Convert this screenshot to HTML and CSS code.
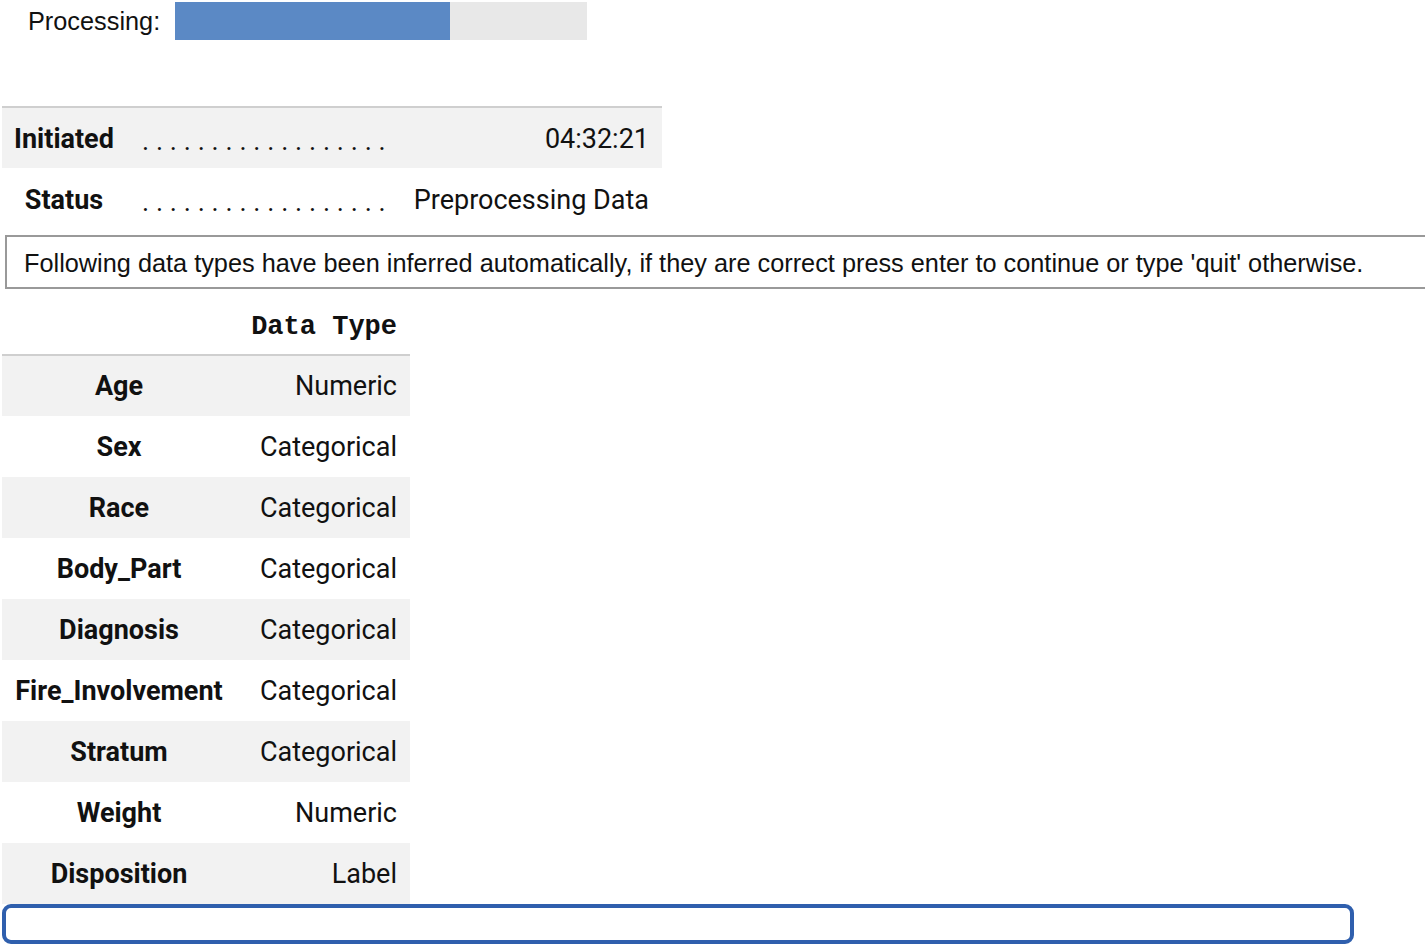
FILE: index.html
```html
<!DOCTYPE html>
<html>
<head>
<meta charset="utf-8">
<link rel="stylesheet" href="styles.css">
</head>
<body>
<div class="progress">
  <span class="progress-label">Processing:</span>
  <div class="progress-bar"><div class="progress-fill" style="width:66.7%"></div></div>
</div>

<table class="status-table">
  <tr class="shaded">
    <th>Initiated</th>
    <td class="dots">. . . . . . . . . . . . . . . . . .</td>
    <td class="val">04:32:21</td>
  </tr>
  <tr>
    <th>Status</th>
    <td class="dots">. . . . . . . . . . . . . . . . . .</td>
    <td class="val">Preprocessing Data</td>
  </tr>
</table>

<div class="message">Following data types have been inferred automatically, if they are correct press enter to continue or type 'quit' otherwise.</div>

<table class="types">
  <thead>
    <tr><th></th><th class="col-head">Data Type</th></tr>
  </thead>
  <tbody>
    <tr><th>Age</th><td>Numeric</td></tr>
    <tr><th>Sex</th><td>Categorical</td></tr>
    <tr><th>Race</th><td>Categorical</td></tr>
    <tr><th>Body_Part</th><td>Categorical</td></tr>
    <tr><th>Diagnosis</th><td>Categorical</td></tr>
    <tr><th>Fire_Involvement</th><td>Categorical</td></tr>
    <tr><th>Stratum</th><td>Categorical</td></tr>
    <tr><th>Weight</th><td>Numeric</td></tr>
    <tr><th>Disposition</th><td>Label</td></tr>
  </tbody>
</table>

<div class="input-box"></div>
</body>
</html>
```

FILE: styles.css
```css
html, body {
  margin: 0;
  padding: 0;
  background: #ffffff;
  color: #111111;
  font-family: Roboto, "Liberation Sans", sans-serif;
}

.progress {
  display: flex;
  align-items: center;
  padding: 2px 0 0 28px;
  height: 38px;
}
.progress-label {
  font-family: "Liberation Sans", Arial, sans-serif;
  font-size: 25.3px;
  width: 147px;
}
.progress-bar {
  width: 412px;
  height: 38px;
  background: #e8e8e8;
}
.progress-fill {
  height: 100%;
  background: #5b89c5;
}

.status-table {
  margin: 66px 0 0 2px;
  width: 660px;
  border-collapse: collapse;
  border-top: 2px solid #cfcfcf;
  font-size: 27px;
}
.status-table tr { height: 61px; }
.status-table tr.shaded { background: #f2f2f2; }
.status-table th {
  font-weight: bold;
  text-align: center;
  padding: 2px 12px 0;
  width: 100px;
}
.status-table td.dots {
  padding: 6px 0 0 16px;
  letter-spacing: 0.05px;
  white-space: nowrap;
}
.status-table td.val {
  text-align: right;
  padding: 2px 13px 0 0;
  white-space: nowrap;
}

.message {
  margin: 6px 0 0 5px;
  height: 54px;
  box-sizing: border-box;
  border: 2px solid #999999;
  border-right: none;
  font-family: "Liberation Sans", Arial, sans-serif;
  font-size: 25.3px;
  line-height: 52px;
  padding-left: 17px;
  white-space: nowrap;
}

.types {
  margin: 0 0 0 2px;
  border-collapse: collapse;
  width: 408px;
  font-size: 27px;
}
.types thead tr { height: 66px; }
.types thead th {
  border-bottom: 2px solid #cfcfcf;
}
.types .col-head {
  font-family: "Liberation Mono", "Courier New", monospace;
  font-weight: bold;
  font-size: 27px;
  text-align: right;
  padding: 10px 13px 0 0;
  vertical-align: middle;
}
.types tbody tr { height: 61px; }
.types tbody tr:nth-child(odd) { background: #f2f2f2; }
.types tbody th {
  font-weight: bold;
  text-align: center;
  padding: 0 12px;
  width: 210px;
}
.types tbody td {
  text-align: right;
  padding: 0 13px 0 0;
}

.input-box {
  margin: 0 0 0 2px;
  width: 1352px;
  height: 40px;
  box-sizing: border-box;
  border: 4px solid #2f5fad;
  border-radius: 9px;
}
```
